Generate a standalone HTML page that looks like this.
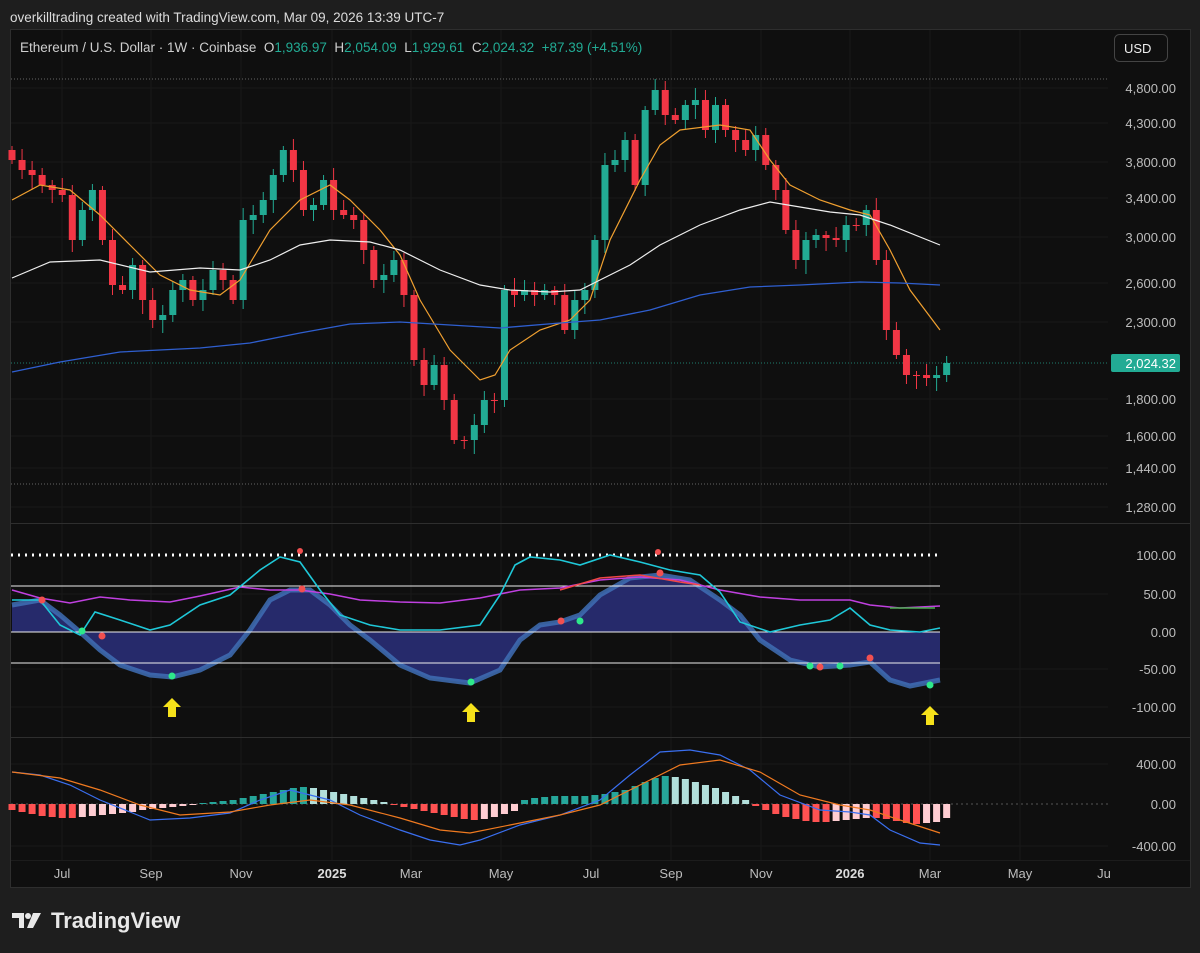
<!DOCTYPE html>
<html><head><meta charset="utf-8"><style>
html,body{margin:0;padding:0;background:#1e1e1e;width:1200px;height:953px;overflow:hidden;font-family:"Liberation Sans",sans-serif}
svg{position:absolute;left:0;top:0}
</style></head><body>
<svg id="s" width="1200" height="953" viewBox="0 0 1200 953" xmlns="http://www.w3.org/2000/svg" font-family="Liberation Sans, sans-serif">
<rect x="0" y="0" width="1200" height="953" fill="#1e1e1e"/>
<text x="10" y="22" fill="#dcdcdc" font-size="13.5">overkilltrading created with TradingView.com, Mar 09, 2026 13:39 UTC-7</text>
<rect x="10.5" y="29.5" width="1180" height="858" fill="#0f0f0f" stroke="#2e2e2e"/>
<g stroke="#191919" stroke-width="1">
<line x1="62" y1="30" x2="62" y2="860"/><line x1="151" y1="30" x2="151" y2="860"/><line x1="241" y1="30" x2="241" y2="860"/><line x1="332" y1="30" x2="332" y2="860"/><line x1="411" y1="30" x2="411" y2="860"/><line x1="501" y1="30" x2="501" y2="860"/><line x1="591" y1="30" x2="591" y2="860"/><line x1="671" y1="30" x2="671" y2="860"/><line x1="761" y1="30" x2="761" y2="860"/><line x1="850" y1="30" x2="850" y2="860"/><line x1="930" y1="30" x2="930" y2="860"/><line x1="1020" y1="30" x2="1020" y2="860"/>
<line x1="11" y1="88" x2="1108" y2="88"/><line x1="11" y1="123" x2="1108" y2="123"/><line x1="11" y1="162" x2="1108" y2="162"/><line x1="11" y1="198" x2="1108" y2="198"/><line x1="11" y1="237" x2="1108" y2="237"/><line x1="11" y1="283" x2="1108" y2="283"/><line x1="11" y1="322" x2="1108" y2="322"/><line x1="11" y1="399" x2="1108" y2="399"/><line x1="11" y1="436" x2="1108" y2="436"/><line x1="11" y1="468" x2="1108" y2="468"/><line x1="11" y1="507" x2="1108" y2="507"/>
<line x1="11" y1="594" x2="1108" y2="594"/><line x1="11" y1="669" x2="1108" y2="669"/><line x1="11" y1="707" x2="1108" y2="707"/>
<line x1="11" y1="764" x2="1108" y2="764"/><line x1="11" y1="846" x2="1108" y2="846"/>
</g>
<line x1="11" y1="523.5" x2="1190" y2="523.5" stroke="#2e2e2e"/>
<line x1="11" y1="737.5" x2="1190" y2="737.5" stroke="#2e2e2e"/>
<line x1="11" y1="860.5" x2="1190" y2="860.5" stroke="#1c1c1c"/>
<line x1="11" y1="79" x2="1108" y2="79" stroke="#666" stroke-dasharray="1,2"/>
<line x1="11" y1="484" x2="1108" y2="484" stroke="#666" stroke-dasharray="1,2"/>
<line x1="11" y1="363" x2="1108" y2="363" stroke="#22ab94" stroke-dasharray="1,2" opacity=".7"/>
<text x="20" y="52" fill="#cfcfcf" font-size="13.5" style="white-space:pre">Ethereum / U.S. Dollar · 1W · Coinbase  O<tspan fill="#22ab94">1,936.97</tspan>  H<tspan fill="#22ab94">2,054.09</tspan>  L<tspan fill="#22ab94">1,929.61</tspan>  C<tspan fill="#22ab94">2,024.32  +87.39 (+4.51%)</tspan></text>
<rect x="1114.5" y="34.5" width="53" height="27" rx="5" fill="#0f0f0f" stroke="#444"/>
<text x="1124" y="53" fill="#eee" font-size="13">USD</text>
<g fill="#bdbdbd" font-size="13" text-anchor="end">
<text x="1176" y="93">4,800.00</text><text x="1176" y="128">4,300.00</text><text x="1176" y="167">3,800.00</text><text x="1176" y="203">3,400.00</text><text x="1176" y="242">3,000.00</text><text x="1176" y="288">2,600.00</text><text x="1176" y="327">2,300.00</text><text x="1176" y="404">1,800.00</text><text x="1176" y="441">1,600.00</text><text x="1176" y="473">1,440.00</text><text x="1176" y="512">1,280.00</text>
<text x="1176" y="560">100.00</text><text x="1176" y="599">50.00</text><text x="1176" y="637">0.00</text><text x="1176" y="674">-50.00</text><text x="1176" y="712">-100.00</text>
<text x="1176" y="769">400.00</text><text x="1176" y="809">0.00</text><text x="1176" y="851">-400.00</text>
</g>
<rect x="1111" y="354" width="69" height="18" rx="2" fill="#22ab94"/>
<text x="1176" y="368" fill="#fff" font-size="13" text-anchor="end">2,024.32</text>
<g fill="#bdbdbd" font-size="13" text-anchor="middle">
<text x="62" y="878">Jul</text><text x="151" y="878">Sep</text><text x="241" y="878">Nov</text><text x="332" y="878" font-weight="bold" fill="#ddd">2025</text><text x="411" y="878">Mar</text><text x="501" y="878">May</text><text x="591" y="878">Jul</text><text x="671" y="878">Sep</text><text x="761" y="878">Nov</text><text x="850" y="878" font-weight="bold" fill="#ddd">2026</text><text x="930" y="878">Mar</text><text x="1020" y="878">May</text><text x="1104" y="878">Ju</text>
</g>
<polygon fill="#262a6b" points="12,632 12,605 40,600 60,615 80,632 100,650 120,665 150,675 172,677 200,670 230,655 250,630 270,600 290,590 310,590 330,605 350,625 370,640 400,665 430,678 470,683 500,670 520,640 540,625 560,622 580,615 600,595 630,578 660,575 690,580 720,600 740,615 760,640 790,660 820,667 850,665 870,662 890,680 910,686 940,680 940,632"/>
<polyline fill="none" stroke="#3f6fb5" stroke-width="5" opacity=".85" points="12,605 40,600 60,615 80,632 100,650 120,665 150,675 172,677 200,670 230,655 250,630 270,600 290,590 310,590 330,605 350,625 370,640 400,665 430,678 470,683 500,670 520,640 540,625 560,622 580,615 600,595 630,578 660,575 690,580 720,600 740,615 760,640 790,660 820,667 850,665 870,662 890,680 910,686 940,680"/>
<line x1="11" y1="632" x2="940" y2="632" stroke="#eee"/>
<line x1="11" y1="586" x2="940" y2="586" stroke="#eee"/>
<line x1="11" y1="663" x2="940" y2="663" stroke="#eee"/>
<line x1="11" y1="555" x2="940" y2="555" stroke="#fff" stroke-width="3" stroke-dasharray="2,5"/>
<polyline fill="none" stroke="#c040e0" stroke-width="1.5" points="12,590 40,598 70,603 100,597 130,600 170,602 200,596 240,587 270,590 300,590 330,594 360,600 400,602 440,603 480,598 520,590 560,588 600,580 640,577 680,580 720,590 760,597 800,600 850,600 870,605 900,608 940,606"/>
<polyline fill="none" stroke="#f04848" stroke-width="1.5" points="560,590 600,578 640,575 680,582 700,585"/>
<polyline fill="none" stroke="#1fc8d8" stroke-width="1.6" points="12,600 40,600 60,625 80,635 95,612 120,620 150,630 170,625 200,605 230,595 260,570 280,557 300,562 320,590 340,615 370,625 400,630 440,630 480,625 500,595 515,565 530,557 560,560 580,565 610,555 640,562 670,570 700,575 720,592 740,622 770,632 800,625 830,620 850,608 870,625 890,630 920,632 940,628"/>
<polyline fill="none" stroke="#4caf50" stroke-width="1.5" points="890,608 935,608"/>
<g fill="#2ee88a"><circle cx="82" cy="631" r="3.5"/><circle cx="172" cy="676" r="3.5"/><circle cx="471" cy="682" r="3.5"/><circle cx="580" cy="621" r="3.5"/><circle cx="810" cy="666" r="3.5"/><circle cx="840" cy="666" r="3.5"/><circle cx="930" cy="685" r="3.5"/></g>
<g fill="#f25050"><circle cx="42" cy="600" r="3.5"/><circle cx="102" cy="636" r="3.5"/><circle cx="302" cy="589" r="3.5"/><circle cx="561" cy="621" r="3.5"/><circle cx="660" cy="573" r="3.5"/><circle cx="820" cy="667" r="3.5"/><circle cx="870" cy="658" r="3.5"/><circle cx="300" cy="551" r="3"/><circle cx="658" cy="552" r="3"/></g>
<g fill="#f5e11a">
<path d="M172 698 l9 9 h-5 v10 h-8 v-10 h-5z"/>
<path d="M471 703 l9 9 h-5 v10 h-8 v-10 h-5z"/>
<path d="M930 706 l9 9 h-5 v10 h-8 v-10 h-5z"/>
</g>
<line x1="11" y1="804" x2="1108" y2="804" stroke="#555" stroke-dasharray="2,3"/>
<g id="cand"></g><g id="hist"></g>
<polyline fill="none" stroke="#f0a030" stroke-width="1.2" points="12,200 40,185 70,190 100,215 130,245 160,275 190,290 220,295 240,280 270,230 300,200 330,185 350,200 380,230 400,255 420,300 450,350 480,380 495,375 510,350 540,330 570,320 590,300 610,240 640,180 660,145 680,130 720,125 750,130 770,160 790,185 820,200 850,210 870,215 890,250 910,290 940,330"/>
<polyline fill="none" stroke="#eeeeee" stroke-width="1.2" points="12,278 50,262 100,260 150,272 200,268 240,270 270,260 300,245 330,240 370,242 400,250 440,270 480,285 510,290 550,292 580,290 600,280 630,265 660,245 700,225 740,210 770,202 800,207 830,212 860,215 890,225 940,245"/>
<polyline fill="none" stroke="#2f5fd0" stroke-width="1.3" points="12,372 60,362 120,352 200,348 250,343 300,333 350,324 400,322 450,325 500,328 560,323 600,320 650,310 700,295 750,287 800,285 860,282 900,283 940,285"/>
<polyline fill="none" stroke="#3a6ff0" stroke-width="1.2" points="12,772 40,775 70,785 100,800 130,812 150,820 190,818 230,813 260,800 290,790 330,800 360,815 400,830 430,840 460,845 480,840 520,825 560,815 600,800 630,775 660,752 690,750 720,755 750,770 780,795 820,810 850,812 870,815 890,830 920,843 940,845"/>
<polyline fill="none" stroke="#f07a20" stroke-width="1.2" points="12,772 60,778 100,790 140,805 180,815 230,812 270,805 310,800 350,805 400,818 440,830 470,833 510,825 560,815 600,805 640,785 680,765 720,760 760,772 800,795 840,805 870,810 900,820 940,833"/>
<g transform="translate(12,910)" fill="#e8e8e8">
<path d="M0 3 h12 v15 h-5 v-10 h-7z"/><circle cx="16" cy="6" r="3"/><path d="M21 3 h8 l-8 15 h-6z"/>
</g>
<text x="51" y="928" fill="#e8e8e8" font-size="22" font-weight="bold">TradingView</text>
</svg>
<script>
(function(){
var cl=[160,170,175,185,190,195,240,210,190,240,285,290,265,300,320,315,290,280,300,290,270,280,300,220,215,200,175,150,170,210,205,180,210,215,220,250,280,275,260,295,360,385,365,400,440,440,425,400,400,290,295,290,295,290,295,330,300,290,240,165,160,140,185,110,90,115,120,105,100,130,105,130,140,150,135,165,190,230,260,240,235,238,240,225,225,210,260,330,355,375,375,378,375,363];
var hvs=[-6,-8,-10,-12,-13,-14,-14,-13,-12,-11,-10,-9,-8,-6,-5,-4,-3,-2,-1,1,2,3,4,6,8,10,12,14,16,17,16,14,12,10,8,6,4,2,-1,-3,-5,-7,-9,-11,-13,-15,-16,-15,-13,-10,-7,4,6,7,8,8,8,8,9,10,12,14,18,22,26,28,27,25,22,19,16,12,8,4,-2,-6,-10,-13,-15,-17,-18,-18,-17,-16,-15,-14,-14,-15,-17,-19,-20,-19,-18,-14];
var NS="http://www.w3.org/2000/svg",g=document.getElementById('cand'),h=document.getElementById('hist');
function el(p,a){var e=document.createElementNS(NS,'rect');for(var k in a)e.setAttribute(k,a[k]);p.appendChild(e);}
var prev=150,pv=0;
for(var i=0;i<cl.length;i++){var x=12+i*10.05,o=prev,c=cl[i];var up=c<o;var col=up?'#22ab94':'#f23645';
var tp=Math.min(o,c),bt=Math.max(o,c);var w1=tp-4-((i*7)%9),w2=bt+4+((i*5)%11);
el(g,{x:x-0.5,y:w1,width:1,height:w2-w1,fill:col});el(g,{x:x-3.5,y:tp,width:7,height:Math.max(1,bt-tp),fill:col});prev=c;
var hv=hvs[i]||0,hc;
if(hv>=0)hc=hv>=pv?'#26a69a':'#b2dfdb';else hc=hv<=pv?'#ff5252':'#ffcdd2';pv=hv;
el(h,{x:x-3.5,y:hv>=0?804-hv:804,width:7,height:Math.abs(hv)||1,fill:hc});}
})();
</script>
</body></html>
